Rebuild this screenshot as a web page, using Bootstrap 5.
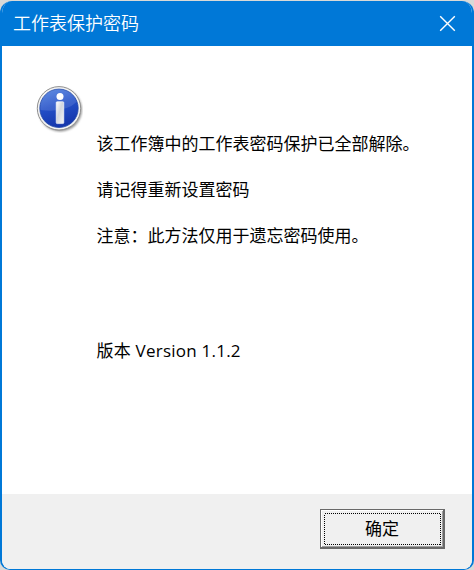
<!DOCTYPE html>
<html lang="zh-CN">
<head>
<meta charset="utf-8">
<meta name="viewport" content="width=device-width, initial-scale=1">
<title>工作表保护密码</title>
<link href="https://cdn.jsdelivr.net/npm/bootstrap@5.3.0/dist/css/bootstrap.min.css" rel="stylesheet">
<style>
  body { background: #d9d9d7; font-family: "Open Sans", "Noto Sans CJK SC", sans-serif; height: 570px; padding-top: 1px; }
  .dialog-window { height: 569px; border: solid #0078d7; border-width: 0 2px 1px; border-radius: 12px 12px 10px 10px; background: #fff; }
  .title-bar { height: 45px; background: #0078d7; color: #fff; padding: 0 16px 0 11px; }
  .title-text { font-family: "Noto Sans CJK SC", sans-serif; font-size: 18px; font-weight: 350; line-height: 26px; padding-bottom: 3px; }
  .close-button { width: 17px; height: 17px; }
  .message-area { padding: 40px 20px 0 34px; }
  .message-text { font-size: 17px; line-height: 23px; color: #000; padding: 46px 0 0 13.5px; }
  .message-text p { margin: 0 0 23px; white-space: nowrap; }
  .message-text .version-line { margin-top: 92px; letter-spacing: .23px; }
  .action-bar { height: 75px; background: #f0f0f0; padding: 15px 27px 0 0; }
  .ok-button { width: 125px; height: 40px; padding: 0 1px 2px; background: #f0f0f0; border: 1px solid #696969; border-right-width: 2px; border-bottom-width: 2px; box-shadow: inset 1px 1px #fff, inset -1px -1px #a0a0a0; color: #000; font-family: "Noto Sans CJK SC", sans-serif; font-size: 17px; line-height: 23px; }
  .ok-button svg { left: 3px; top: 3px; }
</style>
</head>
<body>
<main class="dialog-window d-flex flex-column overflow-hidden" role="dialog">
  <header class="title-bar d-flex align-items-center justify-content-between flex-shrink-0">
    <span class="title-text">工作表保护密码</span>
    <button class="close-button btn p-0 border-0 d-flex" aria-label="关闭">
      <svg width="17" height="17" viewBox="0 0 17 17"><path d="M1.2 1.2l14.6 14.6M15.8 1.2L1.2 15.8" fill="none" stroke="#fff" stroke-width="1.4"/></svg>
    </button>
  </header>
  <section class="message-area d-flex align-items-start flex-grow-1">
    <svg class="flex-shrink-0" width="47" height="47" viewBox="0 0 47 47" aria-hidden="true">
      <defs>
        <linearGradient id="disc" x1="0" y1="0" x2=".3" y2="1"><stop offset="0" stop-color="#4c7fe0"/><stop offset=".5" stop-color="#2450c8"/><stop offset="1" stop-color="#1638ae"/></linearGradient>
        <linearGradient id="stem" x1="0" y1="0" x2="1" y2="1"><stop offset="0" stop-color="#fff"/><stop offset=".45" stop-color="#d4d7de"/><stop offset="1" stop-color="#f4f5f8"/></linearGradient>
        <filter id="soft" x="-20%" y="-20%" width="140%" height="140%"><feGaussianBlur stdDeviation="1"/></filter>
      </defs>
      <circle cx="24.2" cy="23.8" r="21.7" fill="#666" opacity=".7" filter="url(#soft)"/>
      <circle cx="23" cy="22.3" r="21.7" fill="#f3f3f3" stroke="#909090" stroke-width="1"/>
      <circle cx="23" cy="22.3" r="19.2" fill="url(#disc)" stroke="#244aa8" stroke-width=".8"/>
      <path d="M4.5 24A18.5 18.5 0 0 1 40.5 16Q29.5 27 4.5 24Z" fill="#fff" opacity=".12"/>
      <circle cx="24" cy="10.4" r="3.5" fill="#fff"/>
      <rect x="20.2" y="15.7" width="7.6" height="21.9" rx="1" fill="url(#stem)" stroke="#fff" stroke-width=".6"/>
    </svg>
    <div class="message-text">
      <p>该工作簿中的工作表密码保护已全部解除。</p>
      <p>请记得重新设置密码</p>
      <p>注意：此方法仅用于遗忘密码使用。</p>
      <p class="version-line">版本 Version 1.1.2</p>
    </div>
  </section>
  <footer class="action-bar d-flex align-items-start justify-content-end flex-shrink-0">
    <button class="ok-button btn rounded-0 position-relative">
      <svg class="position-absolute" width="117" height="32" aria-hidden="true"><rect x=".5" y=".5" width="116" height="31" fill="none" stroke="#000" stroke-dasharray="1 1" shape-rendering="crispEdges"/></svg>
      确定
    </button>
  </footer>
</main>
<script src="https://cdn.jsdelivr.net/npm/bootstrap@5.3.0/dist/js/bootstrap.bundle.min.js"></script>
</body>
</html>
